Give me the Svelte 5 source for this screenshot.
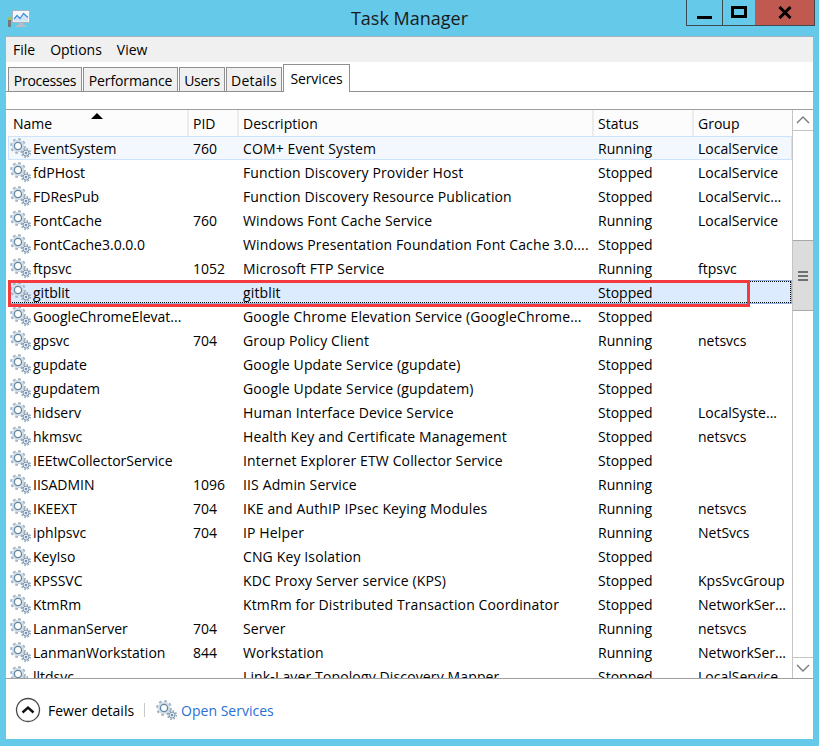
<script lang="ts">
  const rows = [
    ["EventSystem", "760", "COM+ Event System", "Running", "LocalService"],
    ["fdPHost", "", "Function Discovery Provider Host", "Stopped", "LocalService"],
    ["FDResPub", "", "Function Discovery Resource Publication", "Stopped", "LocalServic..."],
    ["FontCache", "760", "Windows Font Cache Service", "Running", "LocalService"],
    ["FontCache3.0.0.0", "", "Windows Presentation Foundation Font Cache 3.0....", "Stopped", ""],
    ["ftpsvc", "1052", "Microsoft FTP Service", "Running", "ftpsvc"],
    ["gitblit", "", "gitblit", "Stopped", ""],
    ["GoogleChromeElevat...", "", "Google Chrome Elevation Service (GoogleChrome...", "Stopped", ""],
    ["gpsvc", "704", "Group Policy Client", "Running", "netsvcs"],
    ["gupdate", "", "Google Update Service (gupdate)", "Stopped", ""],
    ["gupdatem", "", "Google Update Service (gupdatem)", "Stopped", ""],
    ["hidserv", "", "Human Interface Device Service", "Stopped", "LocalSyste..."],
    ["hkmsvc", "", "Health Key and Certificate Management", "Stopped", "netsvcs"],
    ["IEEtwCollectorService", "", "Internet Explorer ETW Collector Service", "Stopped", ""],
    ["IISADMIN", "1096", "IIS Admin Service", "Running", ""],
    ["IKEEXT", "704", "IKE and AuthIP IPsec Keying Modules", "Running", "netsvcs"],
    ["iphlpsvc", "704", "IP Helper", "Running", "NetSvcs"],
    ["KeyIso", "", "CNG Key Isolation", "Stopped", ""],
    ["KPSSVC", "", "KDC Proxy Server service (KPS)", "Stopped", "KpsSvcGroup"],
    ["KtmRm", "", "KtmRm for Distributed Transaction Coordinator", "Stopped", "NetworkSer..."],
    ["LanmanServer", "704", "Server", "Running", "netsvcs"],
    ["LanmanWorkstation", "844", "Workstation", "Running", "NetworkSer..."],
    ["lltdsvc", "", "Link-Layer Topology Discovery Mapper", "Stopped", "LocalService"],
  ];
  const tabs = ["Processes", "Performance", "Users", "Details"];
</script>

{#snippet gear()}
  <svg class="gear" width="24" height="22" viewBox="0 0 24 22" aria-hidden="true">
    <g fill="none">
      <circle cx="9" cy="9" r="6.6" stroke="#a3b3c2" stroke-width="2.6" stroke-dasharray="2.6 2.58" />
      <circle cx="9" cy="9" r="5.2" stroke="#d3dde6" stroke-width="2" />
      <circle cx="9" cy="9" r="3.6" fill="#fff" stroke="#5f86a6" stroke-width="1.3" />
      <circle cx="17" cy="16" r="4.2" stroke="#8ea3b6" stroke-width="1.6" stroke-dasharray="1.6 1.7" />
      <circle cx="17" cy="16" r="3" fill="#dfe7ee" stroke="#7f98ae" stroke-width="1" />
      <circle cx="17" cy="16" r="1.1" fill="#5b7d99" />
    </g>
  </svg>
{/snippet}

<div class="screen">
  <header class="titlebar">
    <svg class="app-icon" width="24" height="20" viewBox="0 0 24 20" aria-hidden="true">
      <rect x="5.5" y="1.5" width="17" height="12" fill="#f4f8fb" stroke="#a9b6bf" />
      <path d="M7 10 10 6.5l3 3 3.5-5 4.5 4V12.5H7z" fill="#cfe4f6" />
      <polyline points="7,10 10,6.5 13,9.5 16.5,4.5 21,8.5" fill="none" stroke="#3f8fd6" stroke-width="1.2" />
      <rect x="1" y="8" width="3" height="3" fill="#9cc26a" />
      <rect x="1" y="11" width="3" height="7" fill="#6f7a7e" />
      <path d="M12 14h4v2h3v2H9v-2h3z" fill="#b4bfc6" />
    </svg>
    <h1>Task Manager</h1>
    <div class="controls">
      <button class="ctl min" aria-label="Minimize"><i></i></button>
      <button class="ctl max" aria-label="Maximize"><i></i></button>
      <button class="ctl close" aria-label="Close">
        <svg width="14" height="13" viewBox="0 0 14 13"><path d="M1.5 1 12.5 12M12.5 1 1.5 12" stroke="#000" stroke-width="3" fill="none" /></svg>
      </button>
    </div>
  </header>

  <main class="window">
    <nav class="menu">
      <span>File</span><span>Options</span><span>View</span>
    </nav>
    <div class="tabs">
      {#each tabs as t}
        <div class="tab">{t}</div>
      {/each}
      <div class="tab active">Services</div>
    </div>
    <div class="spacer"></div>

    <div class="table">
      <div class="list">
        <div class="row head">
          <div class="cell name">Name<span class="sort"></span></div>
          <div class="cell pid">PID</div>
          <div class="cell desc">Description</div>
          <div class="cell status">Status</div>
          <div class="cell group">Group</div>
        </div>
        <div class="body">
          {#each rows as r, i}
            <div class="row" class:hot={i === 0} class:sel={r[0] === "gitblit"}>
              <div class="cell name">{@render gear()}<span>{r[0]}</span></div>
              <div class="cell pid">{r[1]}</div>
              <div class="cell desc">{r[2]}</div>
              <div class="cell status">{r[3]}</div>
              <div class="cell group">{r[4]}</div>
            </div>
          {/each}
        </div>
      </div>
      <div class="scrollbar">
        <div class="arrow up">
          <svg width="14" height="8" viewBox="0 0 14 8"><path d="M1 7 7 1l6 6" fill="none" stroke="#7a7a7a" stroke-width="1.4" /></svg>
        </div>
        <div class="track">
          <div class="thumb"><i></i><i></i><i></i></div>
        </div>
        <div class="arrow down">
          <svg width="14" height="8" viewBox="0 0 14 8"><path d="M1 1l6 6 6-6" fill="none" stroke="#7a7a7a" stroke-width="1.4" /></svg>
        </div>
      </div>
      <div class="callout"></div>
    </div>

    <footer class="footer">
      <svg class="fewer" width="26" height="26" viewBox="0 0 26 26" aria-hidden="true">
        <circle cx="13" cy="13" r="11.5" fill="none" stroke="#4a4a4a" stroke-width="1.3" />
        <path d="M7.5 15.5 13 10.5l5.5 5" fill="none" stroke="#111" stroke-width="2.4" />
      </svg>
      <span class="fewer-label">Fewer details</span>
      <span class="sep"></span>
      {@render gear()}
      <a class="link" href="#services">Open Services</a>
    </footer>
  </main>
</div>

<style>
  :global(body) {
    margin: 0;
    background: #65c9ea;
  }
  .screen {
    width: 819px;
    height: 746px;
    display: flex;
    flex-direction: column;
    background: #65c9ea;
    font-family: "Open Sans", "Noto Sans", sans-serif;
    font-size: 14px;
    color: #000;
    overflow: hidden;
  }
  .titlebar {
    height: 36px;
    flex: none;
    position: relative;
    display: flex;
    align-items: center;
    justify-content: center;
  }
  .app-icon {
    position: absolute;
    left: 7px;
    top: 9px;
  }
  h1 {
    margin: 0 0 1px;
    font-size: 18px;
    font-weight: 400;
    color: #1a1a1a;
  }
  .controls {
    position: absolute;
    top: 0;
    left: 686px;
    display: flex;
    height: 26px;
    border: 1px solid #3d4a50;
    border-top: 0;
    box-sizing: border-box;
  }
  .ctl {
    padding: 0;
    border: 0;
    background: none;
    display: flex;
    align-items: center;
    justify-content: center;
    box-sizing: border-box;
  }
  .min {
    width: 36px;
    border-right: 1px solid #3d4a50;
  }
  .min i {
    display: block;
    width: 15px;
    height: 3px;
    background: #000;
    margin-top: 9px;
  }
  .max {
    width: 32px;
  }
  .max i {
    display: block;
    width: 10px;
    height: 6px;
    border: 3px solid #000;
    margin-top: -2px;
  }
  .close {
    width: 59px;
    background: #c0594f;
  }
  .window {
    flex: 1;
    margin: 0 6px 7px;
    background: #fff;
    border-top: 1px solid #9fb4bf;
    display: flex;
    flex-direction: column;
    min-height: 0;
  }
  .menu {
    height: 25px;
    flex: none;
    background: #f0f0f0;
    display: flex;
    align-items: center;
    gap: 15px;
    padding-left: 7px;
  }
  .tabs {
    height: 30px;
    flex: none;
    display: flex;
    align-items: flex-end;
    padding-left: 2px;
    border-bottom: 1px solid #8f8f8f;
    box-sizing: border-box;
  }
  .tab {
    height: 24px;
    line-height: 25px;
    text-align: center;
    margin-right: 1px;
    background: #f0f0f0;
    border: 1px solid #8f8f8f;
    border-bottom: 0;
    box-sizing: border-box;
    letter-spacing: -0.1px;
  }
  .tab:nth-child(1) { width: 74px; letter-spacing: -0.3px; }
  .tab:nth-child(2) { width: 95px; }
  .tab:nth-child(3) { width: 46px; letter-spacing: -0.3px; }
  .tab:nth-child(4) { width: 56px; letter-spacing: 0.2px; }
  .tab.active {
    width: 67px;
    height: 28px;
    line-height: 27px;
    margin: 0 0 -1px;
    background: #fff;
    position: relative;
  }
  .spacer {
    height: 17px;
    flex: none;
  }
  .table {
    height: 570px;
    flex: none;
    position: relative;
    display: flex;
    padding-left: 2px;
    border-top: 1px solid #a0a0a0;
    border-bottom: 1px solid #a0a0a0;
    box-sizing: border-box;
    overflow: hidden;
  }
  .list {
    width: 784px;
    flex: none;
    overflow: hidden;
  }
  .row {
    display: grid;
    grid-template-columns: 179px 50px 355px 100px 100px;
    height: 24px;
    align-items: center;
    box-sizing: border-box;
    white-space: nowrap;
  }
  .head {
    height: 26px;
    background: #fcfcfc;
  }
  .head .cell {
    height: 100%;
    display: flex;
    align-items: center;
    padding-left: 4px;
    border-left: 2px solid #ececec;
    box-sizing: border-box;
    position: relative;
  }
  .head .cell.name {
    padding-left: 5px;
    border-left: 0;
  }
  .sort {
    position: absolute;
    left: 83px;
    top: 3px;
    width: 0;
    height: 0;
    border-left: 6px solid transparent;
    border-right: 6px solid transparent;
    border-bottom: 6px solid #000;
  }
  .cell {
    padding-left: 6px;
    overflow: hidden;
  }
  .desc {
    letter-spacing: 0.13px;
  }
  .head .desc {
    letter-spacing: 0;
  }
  .body .name {
    display: flex;
    align-items: center;
    padding-left: 1px;
  }
  .hot {
    background: #f3f8ff;
    box-shadow: inset 0 0 0 1px #cde3fb;
  }
  .sel {
    background: #dcebfd;
    box-shadow: inset 0 0 0 1px #8fb4e0;
    outline: 1px dotted #000;
    outline-offset: -2px;
  }
  .gear {
    flex: none;
  }
  .scrollbar {
    width: 21px;
    flex: none;
    display: flex;
    flex-direction: column;
    border-left: 1px solid #c4c4c4;
    box-sizing: border-box;
  }
  .arrow {
    height: 20px;
    flex: none;
    display: flex;
    align-items: center;
    justify-content: center;
  }
  .up {
    border-bottom: 1px solid #c4c4c4;
  }
  .down {
    border-top: 1px solid #c4c4c4;
  }
  .track {
    flex: 1;
    padding-top: 109px;
  }
  .thumb {
    height: 71px;
    background: #dcdcdc;
    border-top: 1px solid #a8a8a8;
    border-bottom: 1px solid #a8a8a8;
    box-sizing: border-box;
    display: flex;
    flex-direction: column;
    align-items: center;
    justify-content: center;
    gap: 2px;
  }
  .thumb i {
    display: block;
    width: 10px;
    height: 2px;
    background: #6f6f6f;
  }
  .callout {
    position: absolute;
    left: 2px;
    top: 170px;
    width: 742px;
    height: 27px;
    border: 3px solid #f23a3f;
    box-sizing: border-box;
    pointer-events: none;
  }
  .footer {
    flex: 1;
    display: flex;
    align-items: center;
    padding: 2px 0 0 9px;
    min-height: 0;
  }
  .fewer {
    margin-right: 7px;
  }
  .sep {
    width: 1px;
    height: 14px;
    background: #c8c8c8;
    margin: 0 10px;
  }
  .link {
    color: #2a6fd6;
    text-decoration: none;
    margin-left: 2px;
  }
</style>
